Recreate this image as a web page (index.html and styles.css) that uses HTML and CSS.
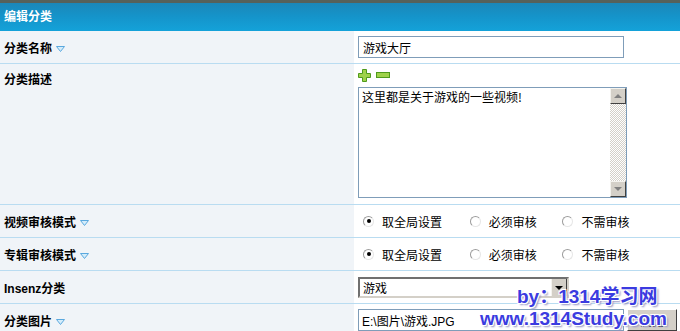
FILE: index.html
```html
<!DOCTYPE html>
<html lang="zh-CN">
<head>
    <meta charset="UTF-8">
    <title>编辑分类</title>
    <link rel="stylesheet" href="styles.css">
</head>
<body>
    <div class="panel">
        <div class="panel-head">编辑分类</div>
        <table class="form-table">
            <tr>
                <th>分类名称 <svg class="tip" width="9" height="6" viewBox="0 0 9 6"><polygon points="0.5,0.5 8.5,0.5 4.5,5.5" fill="#d4ecfa" stroke="#5aa8de"/></svg></th>
                <td><input type="text" class="text" value="游戏大厅"></td>
            </tr>
            <tr class="tall">
                <th>分类描述</th>
                <td>
                    <div class="tools">
                        <svg width="13" height="13" viewBox="0 0 13 13"><path d="M4.5 0.5h4v4h4v4h-4v4h-4v-4h-4v-4h4z" fill="#9fd24a" stroke="#4f9a1c"/></svg>
                        <svg width="14" height="6" viewBox="0 0 14 6"><rect x="0.5" y="0.5" width="13" height="5" fill="#9fd24a" stroke="#4f9a1c"/></svg>
                    </div>
                    <div class="memo">
                        <textarea>这里都是关于游戏的一些视频!</textarea>
                        <div class="vscroll">
                            <span class="btn up"></span>
                            <span class="btn down"></span>
                        </div>
                    </div>
                </td>
            </tr>
            <tr>
                <th>视频审核模式 <svg class="tip" width="9" height="6" viewBox="0 0 9 6"><polygon points="0.5,0.5 8.5,0.5 4.5,5.5" fill="#d4ecfa" stroke="#5aa8de"/></svg></th>
                <td class="radios">
                    <label><input type="radio" name="v" checked> 取全局设置</label>
                    <label><input type="radio" name="v"> 必须审核</label>
                    <label><input type="radio" name="v"> 不需审核</label>
                </td>
            </tr>
            <tr>
                <th>专辑审核模式 <svg class="tip" width="9" height="6" viewBox="0 0 9 6"><polygon points="0.5,0.5 8.5,0.5 4.5,5.5" fill="#d4ecfa" stroke="#5aa8de"/></svg></th>
                <td class="radios">
                    <label><input type="radio" name="a" checked> 取全局设置</label>
                    <label><input type="radio" name="a"> 必须审核</label>
                    <label><input type="radio" name="a"> 不需审核</label>
                </td>
            </tr>
            <tr>
                <th class="plain">Insenz分类</th>
                <td>
                    <div class="select">
                        <span>游戏</span>
                        <span class="arrow"></span>
                    </div>
                </td>
            </tr>
            <tr>
                <th>分类图片 <svg class="tip" width="9" height="6" viewBox="0 0 9 6"><polygon points="0.5,0.5 8.5,0.5 4.5,5.5" fill="#d4ecfa" stroke="#5aa8de"/></svg></th>
                <td class="file">
                    <input type="text" class="text" value="E:\图片\游戏.JPG">
                    <button>浏览</button>
                </td>
            </tr>
        </table>
        <div class="mark">
            <div class="by">by：1314学习网</div>
            <div class="www">www.1314Study.com</div>
        </div>
    </div>
</body>
</html>
```

FILE: styles.css
```css
body {
    margin: 0;
    font-family: "Noto Sans CJK SC", "DejaVu Sans", sans-serif;
    font-size: 12px;
    color: #000;
    background: #fff;
    overflow: hidden;
}

.panel {
    position: relative;
    width: 680px;
    height: 331px;
    overflow: hidden;
}

.panel-head {
    height: 28px;
    line-height: 26px;
    padding-left: 4px;
    border-top: 3px solid #56615a;
    background: linear-gradient(#1b87b8, #1593c9 45%, #14a2d9);
    color: #fff;
    font-weight: bold;
    font-size: 12px;
}

.form-table {
    width: 100%;
    border-collapse: collapse;
}

.form-table th,
.form-table td {
    border-bottom: 1px solid #b9dcf1;
    height: 32px;
    padding: 0;
}

.form-table th {
    width: 350px;
    padding-left: 4px;
    text-align: left;
    font-weight: bold;
    background: #f0f4f8;
    white-space: nowrap;
}

.form-table th.plain {
    font-family: "Liberation Sans", "Noto Sans CJK SC", sans-serif;
}

.form-table td {
    padding-left: 4px;
}

.tip {
    vertical-align: middle;
    margin-left: 1px;
}

.tall th {
    vertical-align: top;
    padding-top: 6px;
    height: auto;
}

.tall td {
    vertical-align: top;
    padding-top: 5px;
    padding-bottom: 6px;
}

.tools {
    display: flex;
    align-items: center;
    gap: 5px;
    height: 12px;
    margin-bottom: 6px;
}

.text {
    box-sizing: border-box;
    width: 266px;
    height: 22px;
    border: 1px solid #7f9db9;
    padding: 0 4px;
    font: 12px "Noto Sans CJK SC", sans-serif;
    outline: none;
}

.memo {
    display: flex;
    width: 267px;
    height: 109px;
    border: 1px solid #7f9db9;
    background: #fff;
}

.memo textarea {
    flex: 1;
    border: none;
    resize: none;
    padding: 1px 3px;
    font: 12px/16px "Noto Sans CJK SC", sans-serif;
    outline: none;
}

.vscroll {
    width: 16px;
    display: flex;
    flex-direction: column;
    justify-content: space-between;
    background: repeating-conic-gradient(#d4d0c8 0 25%, #fff 0 50%) 0 0 / 2px 2px;
}

.vscroll .btn {
    position: relative;
    height: 16px;
    background: #d4d0c8;
    border: 1px solid;
    border-color: #f4f3ee #404040 #404040 #f4f3ee;
    box-sizing: border-box;
}

.vscroll .btn::after {
    content: "";
    position: absolute;
    left: 3px;
    border-left: 4px solid transparent;
    border-right: 4px solid transparent;
}

.vscroll .up::after {
    top: 5px;
    border-bottom: 4px solid #808080;
}

.vscroll .down::after {
    top: 5px;
    border-top: 4px solid #808080;
}

.radios label {
    display: inline-flex;
    align-items: center;
    font-size: 12px;
}

.radios label:nth-child(1) { margin-left: 5px; width: 104px; }
.radios label:nth-child(2) { width: 90px; }

.radios input {
    appearance: none;
    width: 11px;
    height: 11px;
    margin: 0 8px 0 0;
    border-radius: 50%;
    border: 1px solid #b8b8b8;
    border-color: #9c9c9c #e6e6e6 #e6e6e6 #9c9c9c;
    background: #fff;
    position: relative;
}

.radios input:checked::after {
    content: "";
    position: absolute;
    left: 2.5px;
    top: 2.5px;
    width: 4px;
    height: 4px;
    border-radius: 50%;
    background: #000;
}

.select {
    box-sizing: border-box;
    display: flex;
    align-items: center;
    width: 211px;
    height: 21px;
    border: 2px solid;
    border-color: #707070 #d4d0c8 #d4d0c8 #707070;
    background: #fff;
    font-size: 12px;
    padding-left: 3px;
}

.select span:first-child {
    flex: 1;
}

.select .arrow {
    position: relative;
    width: 16px;
    height: 17px;
    background: #d4d0c8;
    border-left: 1px solid #f4f3ee;
    border-right: 1px solid #404040;
    box-sizing: border-box;
}

.select .arrow::after {
    content: "";
    position: absolute;
    left: 3px;
    top: 7px;
    border-left: 4px solid transparent;
    border-right: 4px solid transparent;
    border-top: 4px solid #000;
}

.file {
    display: flex;
    align-items: center;
    gap: 3px;
    height: 32px;
}

.file .text {
    font-family: "Liberation Sans", "Noto Sans CJK SC", sans-serif;
    font-size: 12px;
    padding: 0 3px;
}

.file button {
    height: 22px;
    width: 50px;
    background: #d4d0c8;
    border: 1px solid;
    border-color: #fff #404040 #404040 #fff;
    font: 12px "Noto Sans CJK SC", sans-serif;
    padding: 0;
}

/* watermark over the corner */
.mark {
    position: absolute;
    left: 480px;
    top: 286px;
    width: 200px;
    font-family: "Liberation Sans", "Noto Sans CJK SC", sans-serif;
    font-weight: bold;
    font-size: 19px;
    line-height: 22px;
    color: #3b3be0;
    text-shadow: 1px 1px 0 #fff, -1px -1px 0 #fff, 1px -1px 0 #fff, -1px 1px 0 #fff, 2px 2px 2px #9090c0;
    white-space: nowrap;
}

.mark .by {
    padding-left: 37px;
}
```
